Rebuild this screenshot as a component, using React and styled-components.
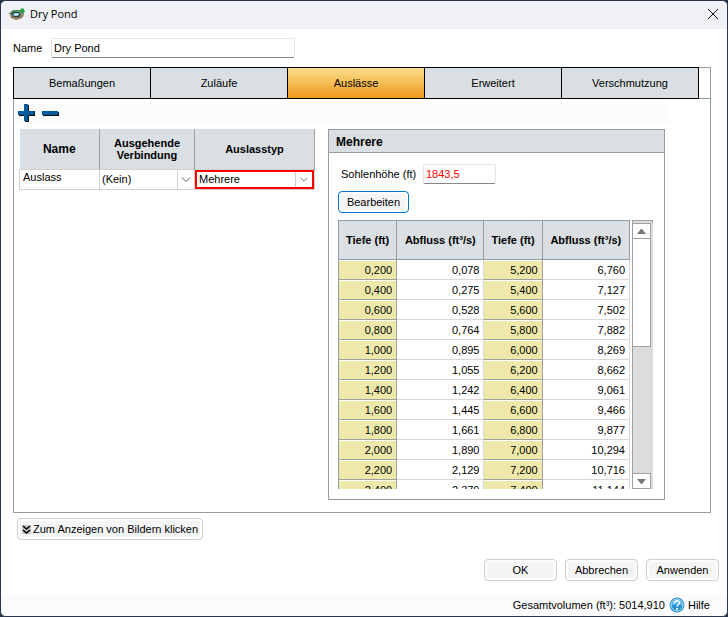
import React from "react";
import styled, { createGlobalStyle } from "styled-components";

const GlobalStyle = createGlobalStyle`
  * {
    box-sizing: border-box;
  }

  body {
    margin: 0;
    background: #28344a;
    font-family: "Liberation Sans", Arial, sans-serif;
    font-size: 11px;
    line-height: 14px;
    color: #000;
  }

  button,
  input,
  select {
    margin: 0;
    padding: 0;
    font: inherit;
    color: inherit;
  }
`;

// * Window
const Dialog = styled.div`
  display: flex;
  flex-direction: column;
  min-height: 100vh;
  border: 1px solid #28344a;
  border-radius: 6px;
  overflow: hidden;
  background: white;
`;

const TitleBar = styled.header`
  display: flex;
  align-items: center;
  gap: 5px;
  height: 28px;
  padding: 0 6px 2px 8px;
  background: #f0f1f7;

  h1 {
    flex: 1;
    margin: 0;
    font-family: "Open Sans", "Noto Sans", sans-serif;
    font-size: 11px;
    font-weight: 400;
  }
`;

const CloseButton = styled.button`
  display: flex;
  border: 0;
  background: none;
`;

const NameRow = styled.div`
  display: flex;
  align-items: center;
  padding: 9px 12px;

  label {
    width: 38px;
  }
`;

const TextBox = styled.input`
  width: ${(props) => props.$width}px;
  height: 20px;
  padding: 0 2px;
  border: 1px solid #e5e5e5;
  border-bottom-color: #868686;
  border-radius: 2px;
  background: white;
  color: ${(props) => (props.$changed ? "red" : "black")};
`;

// * Tabs
const TabPage = styled.main`
  margin: 0 16px 0 12px;
  border: 1px solid #929ca3;
`;

const TabList = styled.div`
  display: flex;
  margin: -1px 0 0 -1px;
  padding-right: 12px;
  border-bottom: 1px solid #929ca3;
`;

const Tab = styled.button`
  flex: 1;
  height: 32px;
  margin: 0 -1px -1px 0;
  border: 1px solid black;
  background: ${(props) =>
    props.$active ? "linear-gradient(#fce08c, #ee991d)" : "#d9dfe3"};
`;

const ToolBar = styled.div`
  display: flex;
  align-items: center;
  gap: 6px;
  height: 20px;
  margin: 4px 40px 6px 0;
  padding-left: 4px;
  background: #fcfcfc;
`;

const ToolButton = styled.button`
  display: flex;
  border: 0;
  background: none;
`;

const Columns = styled.div`
  display: flex;
  align-items: flex-start;
  gap: 13px;
  padding: 0 45px 12px 5px;
`;

// * Outlet list
const OutletTable = styled.table`
  flex: none;
  width: 295px;
  border-collapse: collapse;
  table-layout: fixed;

  th {
    height: 40px;
    padding: 0;
    border-right: 1px solid #a0a0a0;
    background: #d9dfe3;
    line-height: 12px;
  }

  th:first-child {
    font-size: 12px;
  }

  td {
    height: 20px;
    padding: 0;
    border: 1px solid #d0d0d0;
    vertical-align: top;
  }
`;

const CellText = styled.div`
  padding: 0 3px;
`;

const SelectCell = styled.div`
  display: flex;
  position: relative;
  height: 19px;
  border: ${(props) => (props.$invalid ? "2px solid red" : "0")};

  select {
    flex: 1;
    width: 100%;
    padding: 0 18px 0 2px;
    border: 0;
    border-radius: 0;
    appearance: none;
    background: white;
  }

  svg {
    position: absolute;
    top: 0;
    right: 0;
    width: 17px;
    height: 100%;
    border-left: 1px solid #d0d0d0;
    pointer-events: none;
  }
`;

// * Outlet details
const Group = styled.section`
  flex: 1;
  border: 1px solid #929ca3;

  h2 {
    height: 23px;
    margin: 0;
    padding: 0 7px;
    border-bottom: 1px solid #929ca3;
    background: #d9dfe3;
    font-size: 12px;
    line-height: 24px;
  }
`;

const GroupBody = styled.div`
  padding: 11px 11px 10px 9px;
`;

const FieldRow = styled.div`
  display: flex;
  align-items: center;
  margin-bottom: 7px;
  padding-left: 3px;

  label {
    width: 82px;
    white-space: nowrap;
  }
`;

const Button = styled.button`
  height: 22px;
  min-width: ${(props) => (props.$primary ? 71 : 73)}px;
  padding: 0 4px;
  border: 1px solid ${(props) => (props.$primary ? "#0078d4" : "#d0d0d0")};
  border-radius: 4px;
  background: #f5f5f5;
  box-shadow: inset 0 0 0 2px #fdfdfd;

  svg {
    margin-right: 2px;
    vertical-align: -1px;
  }
`;

const Scroller = styled.div`
  display: flex;
  align-items: flex-start;
  gap: 2px;
  height: 269px;
  margin-top: 7px;
  overflow: hidden;
`;

const RatingTable = styled.table`
  flex: 1;
  border-collapse: separate;
  border-spacing: 0;
  table-layout: fixed;
  border-left: 1px solid #929ca3;
  text-align: right;

  th {
    height: 40px;
    padding: 0;
    border: solid #929ca3;
    border-width: 1px 1px 1px 0;
    background: #d9dfe3;
    text-align: center;
  }

  td {
    height: 20px;
    padding: 0 4px;
    border: solid #d9d9d9;
    border-width: 0 1px 1px 0;
  }

  td:nth-child(odd) {
    border-color: #a0a0a0;
    background: #eee8aa;
    box-shadow: inset 0 1px white;
  }
`;

const ScrollBar = styled.div`
  display: flex;
  flex-direction: column;
  width: 21px;
  height: 100%;
  border: solid #a0a0a0;
  border-width: 1px 0 0 1px;
  background: #dcdcdc;

  &::before {
    content: "";
    height: 2px;
    border-right: 1px solid #a0a0a0;
  }
`;

const ScrollButton = styled.button`
  display: flex;
  align-items: center;
  justify-content: center;
  width: 18px;
  height: 16px;
  border: 1px solid #a0a0a0;
  border-left: 0;
  background: white;
`;

const ScrollThumb = styled.div`
  width: 18px;
  height: 108px;
  margin-bottom: auto;
  border: solid #a0a0a0;
  border-width: 0 1px 1px 0;
  background: white;
`;

// * Footer
const PictureRow = styled.div`
  padding: 5px 16px 0;
`;

const Actions = styled.div`
  display: flex;
  justify-content: flex-end;
  gap: 8px;
  margin-top: auto;
  padding: 0 8px 13px;
`;

const StatusBar = styled.footer`
  display: flex;
  align-items: center;
  justify-content: flex-end;
  gap: 4px;
  height: 22px;
  padding: 0 17px 0 0;
  background: #fbfbfb;

  a {
    display: flex;
    align-items: center;
    gap: 3px;
    color: black;
    text-decoration: none;
  }
`;

const tabs = [
  "Bemaßungen",
  "Zuläufe",
  "Auslässe",
  "Erweitert",
  "Verschmutzung",
];

const ratings = [
  ["0,200", "0,078", "5,200", "6,760"],
  ["0,400", "0,275", "5,400", "7,127"],
  ["0,600", "0,528", "5,600", "7,502"],
  ["0,800", "0,764", "5,800", "7,882"],
  ["1,000", "0,895", "6,000", "8,269"],
  ["1,200", "1,055", "6,200", "8,662"],
  ["1,400", "1,242", "6,400", "9,061"],
  ["1,600", "1,445", "6,600", "9,466"],
  ["1,800", "1,661", "6,800", "9,877"],
  ["2,000", "1,890", "7,000", "10,294"],
  ["2,200", "2,129", "7,200", "10,716"],
  ["2,400", "2,379", "7,400", "11,144"],
];

function PondIcon() {
  return (
    <svg width="16" height="14" viewBox="0 0 16 14">
      <path d="M0 6 4 3h11v5l-2 3-6 1-5-2z" fill="#b5a585" />
      <path d="m1 8 1 3 5 2 6-2 2-4-8 3z" fill="#8e7b5a" />
      <path d="m0 7 4-4h9l-1 2H6L3 7z" fill="#519157" />
      <path d="m2 7 3-2h5l2 2-2 3H5z" fill="#263d49" />
      <path d="m4 7 2-1h4v2L8 9H5z" fill="#8cd6f4" />
      <path d="M6 7h3v1H6z" fill="white" />
      <path d="m13 1 2 1v1l1 1-1 2-2 1-2-2V3z" fill="#2ba34a" />
    </svg>
  );
}

function Chevron() {
  return (
    <svg viewBox="0 0 16 18" fill="none" stroke="#555">
      <path d="m4 7 4 4 4-4" />
    </svg>
  );
}

function Dropdown({ label, value, invalid }) {
  return (
    <SelectCell $invalid={invalid}>
      <select aria-label={label} defaultValue={value}>
        <option>{value}</option>
      </select>
      <Chevron />
    </SelectCell>
  );
}

function HelpIcon() {
  return (
    <svg width="16" height="16" viewBox="0 0 16 16" fill="none">
      <circle cx="8" cy="8" r="7.5" fill="#2b93d1" />
      <path d="M2 9a6 6 0 0 1 12 0Q8 5 2 9" fill="#63bdec" />
      <circle cx="8" cy="8" r="6" stroke="#b9e2f6" />
      <path
        d="M5.5 6.5c0-3.5 5-3.5 5-.7 0 1.7-2.5 1.7-2.5 3.7"
        stroke="white"
        strokeWidth="1.5"
      />
      <path d="M7 11h2v1.5H7z" fill="white" />
    </svg>
  );
}

export default function App() {
  return (
    <>
      <GlobalStyle />
      <Dialog role="dialog" aria-labelledby="dialog-title">
        <TitleBar>
          <PondIcon />
          <h1 id="dialog-title">Dry Pond</h1>
          <CloseButton aria-label="Schließen">
            <svg width="16" height="16" fill="none" stroke="#111">
              <path d="m3 3 10 10M13 3 3 13" />
            </svg>
          </CloseButton>
        </TitleBar>

        <NameRow>
          <label htmlFor="pond-name">Name</label>
          <TextBox id="pond-name" $width={244} defaultValue="Dry Pond" />
        </NameRow>

        <TabPage>
          <TabList role="tablist">
            {tabs.map((tab) => (
              <Tab
                key={tab}
                role="tab"
                aria-selected={tab === "Auslässe"}
                $active={tab === "Auslässe"}
              >
                {tab}
              </Tab>
            ))}
          </TabList>

          <ToolBar>
            <ToolButton aria-label="Hinzufügen">
              <svg width="18" height="18">
                <path d="M7 1h4v6h6v5h-6v6H7v-6H1V7h6z" fill="#111" />
                <path d="M6 0h4v7h6v4h-6v6H6v-6H0V7h6z" fill="#005a9e" />
              </svg>
            </ToolButton>
            <ToolButton aria-label="Entfernen">
              <svg width="18" height="18">
                <path d="M1 8h16v4H1z" fill="#111" />
                <path d="M0 7h16v4H0z" fill="#005a9e" />
              </svg>
            </ToolButton>
          </ToolBar>

          <Columns>
            <OutletTable>
              <colgroup>
                <col width="80" />
                <col width="95" />
                <col width="120" />
              </colgroup>
              <thead>
                <tr>
                  <th>Name</th>
                  <th>
                    Ausgehende
                    <br />
                    Verbindung
                  </th>
                  <th>Auslasstyp</th>
                </tr>
              </thead>
              <tbody>
                <tr>
                  <td>
                    <CellText>Auslass</CellText>
                  </td>
                  <td>
                    <Dropdown label="Ausgehende Verbindung" value="(Kein)" />
                  </td>
                  <td>
                    <Dropdown label="Auslasstyp" value="Mehrere" invalid />
                  </td>
                </tr>
              </tbody>
            </OutletTable>

            <Group>
              <h2>Mehrere</h2>
              <GroupBody>
                <FieldRow>
                  <label htmlFor="invert">Sohlenhöhe (ft)</label>
                  <TextBox
                    id="invert"
                    $width={73}
                    $changed
                    defaultValue="1843,5"
                  />
                </FieldRow>
                <Button $primary>Bearbeiten</Button>

                <Scroller>
                  <RatingTable>
                    <colgroup>
                      <col width="20%" />
                      <col width="30%" />
                      <col width="20%" />
                      <col width="30%" />
                    </colgroup>
                    <thead>
                      <tr>
                        <th>Tiefe (ft)</th>
                        <th>Abfluss (ft³/s)</th>
                        <th>Tiefe (ft)</th>
                        <th>Abfluss (ft³/s)</th>
                      </tr>
                    </thead>
                    <tbody>
                      {ratings.map((row) => (
                        <tr key={row[0]}>
                          {row.map((cell) => (
                            <td key={cell}>{cell}</td>
                          ))}
                        </tr>
                      ))}
                    </tbody>
                  </RatingTable>
                  <ScrollBar>
                    <ScrollButton aria-label="Nach oben">
                      <svg width="9" height="5">
                        <path d="M0 5 4 0h1l4 5z" fill="#777" />
                      </svg>
                    </ScrollButton>
                    <ScrollThumb />
                    <ScrollButton aria-label="Nach unten">
                      <svg width="9" height="5">
                        <path d="M0 0h9L5 5H4z" fill="#777" />
                      </svg>
                    </ScrollButton>
                  </ScrollBar>
                </Scroller>
              </GroupBody>
            </Group>
          </Columns>
        </TabPage>

        <PictureRow>
          <Button>
            <svg width="9" height="9" fill="none" stroke="black">
              <path d="M0 0h9v9H0z" fill="#c8c8c8" stroke="none" />
              <path d="m1 1 3.5 3L8 1M1 5l3.5 3L8 5" strokeWidth="1.5" />
            </svg>
            Zum Anzeigen von Bildern klicken
          </Button>
        </PictureRow>

        <Actions>
          <Button>OK</Button>
          <Button>Abbrechen</Button>
          <Button>Anwenden</Button>
        </Actions>

        <StatusBar>
          <span>Gesamtvolumen (ft³): 5014,910</span>
          <a href="#hilfe">
            <HelpIcon />
            Hilfe
          </a>
        </StatusBar>
      </Dialog>
    </>
  );
}
